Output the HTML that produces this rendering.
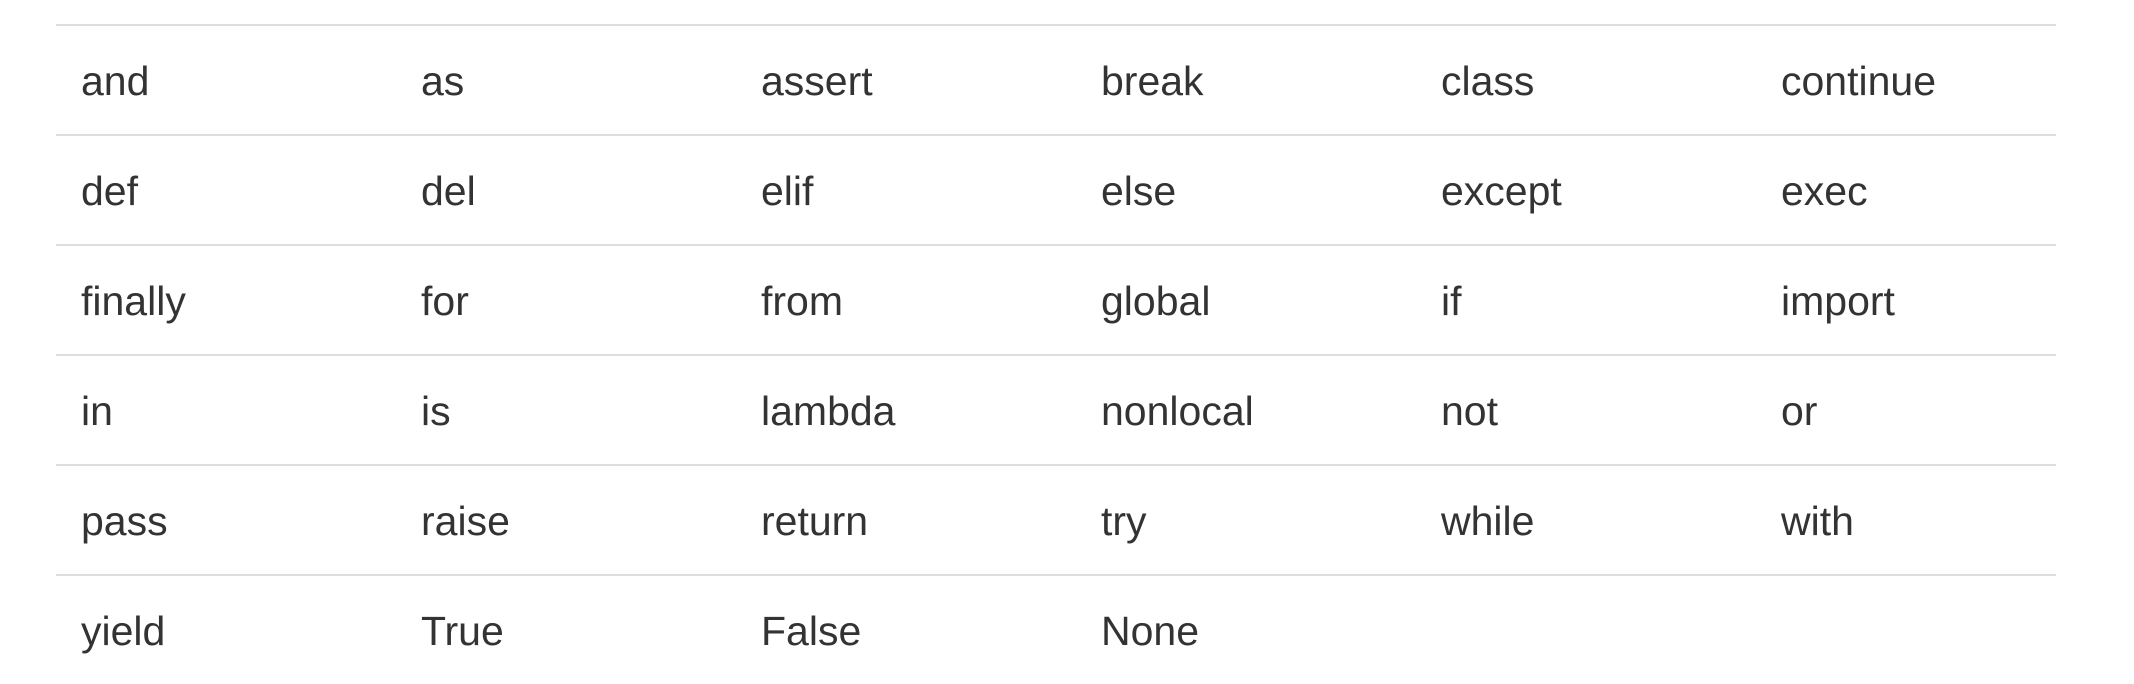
<!DOCTYPE html>
<html><head><style>
html,body{margin:0;padding:0;background:#fff;width:2134px;height:684px;overflow:hidden}
.t{position:absolute;left:56px;top:24px;width:2000px}
.r{position:relative;height:108px;border-top:2px solid #ddd}
.r span{position:absolute;top:35px;font:41px/41px "Liberation Sans",Arial,sans-serif;color:#333;white-space:nowrap}
</style></head><body>
<div class="t">
<div class="r"><span style="left:25px">and</span><span style="left:365px">as</span><span style="left:705px">assert</span><span style="left:1045px">break</span><span style="left:1385px">class</span><span style="left:1725px">continue</span></div>
<div class="r"><span style="left:25px">def</span><span style="left:365px">del</span><span style="left:705px">elif</span><span style="left:1045px">else</span><span style="left:1385px">except</span><span style="left:1725px">exec</span></div>
<div class="r"><span style="left:25px">finally</span><span style="left:365px">for</span><span style="left:705px">from</span><span style="left:1045px">global</span><span style="left:1385px">if</span><span style="left:1725px">import</span></div>
<div class="r"><span style="left:25px">in</span><span style="left:365px">is</span><span style="left:705px">lambda</span><span style="left:1045px">nonlocal</span><span style="left:1385px">not</span><span style="left:1725px">or</span></div>
<div class="r"><span style="left:25px">pass</span><span style="left:365px">raise</span><span style="left:705px">return</span><span style="left:1045px">try</span><span style="left:1385px">while</span><span style="left:1725px">with</span></div>
<div class="r"><span style="left:25px">yield</span><span style="left:365px">True</span><span style="left:705px">False</span><span style="left:1045px">None</span></div>
</div>
</body></html>
